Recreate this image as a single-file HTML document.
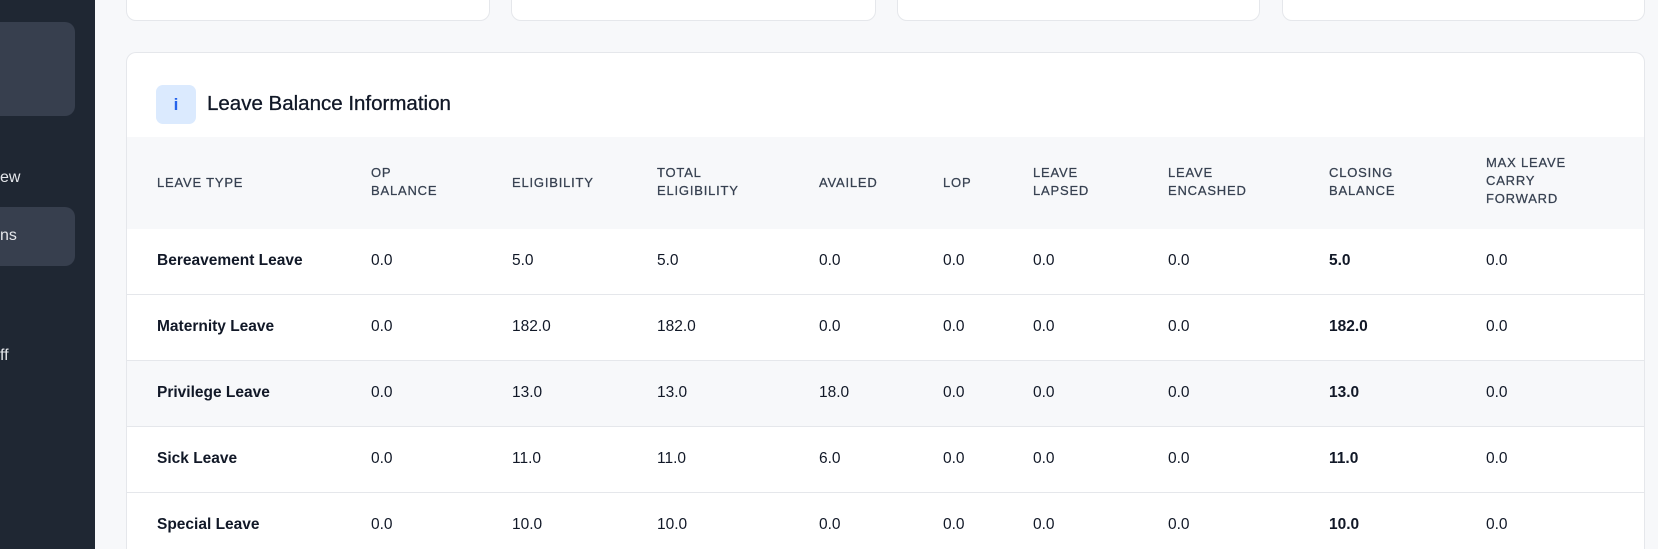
<!DOCTYPE html>
<html style="overflow:hidden;height:549px"><head><style>
*{margin:0;padding:0;box-sizing:border-box}
html,body{width:1658px;height:549px;overflow:hidden}
body{background:#f7f8fa;font-family:"Liberation Sans","DejaVu Sans",sans-serif;position:relative;color:#111827}
.sb{position:absolute;left:0;top:0;width:95px;height:549px;background:#1f2733}
.sbi{position:absolute;left:0;width:75px;background:#373f4e;border-radius:0 10px 10px 0}
.sbt{position:absolute;left:0;color:#e5e7eb;font-size:16px}
.tc{position:absolute;top:-10px;height:31px;background:#fff;border:1px solid #e5e7eb;border-radius:10px}
.card{position:absolute;left:126px;top:52px;width:1519px;height:497px;background:#fff;border:1px solid #e5e7eb;border-bottom:none;border-radius:10px 10px 0 0;overflow:hidden}
.ic{position:absolute;left:29px;top:32px;width:40px;height:39px;background:#dbeafe;border-radius:7px;color:#2563eb;font-size:17px;text-align:center;line-height:39px;font-weight:bold}
.tt{position:absolute;left:80px;top:39px;font-size:20.5px;color:#111827;-webkit-text-stroke:.3px #111827}
.hd{position:absolute;left:0;top:84px;width:100%;height:92px;background:#f7f8fa}
.h{position:absolute;font-size:13px;letter-spacing:.8px;color:#374151;line-height:18px;-webkit-text-stroke:.25px #374151}
.row{position:absolute;left:0;width:100%;height:66px;border-top:1px solid #e5e7eb}
.c{position:absolute;top:23px;font-size:15.5px;color:#111827}
.b{font-weight:bold}
</style></head><body>
<div class="sb">
<div class="sbi" style="top:22px;height:94px"></div>
<div class="sbt" style="top:169px">ew</div>
<div class="sbi" style="top:207px;height:59px"></div>
<div class="sbt" style="top:227px">ns</div>
<div class="sbt" style="top:347px">ff</div>
</div>
<div class="tc" style="left:126px;width:364px"></div>
<div class="tc" style="left:511px;width:365px"></div>
<div class="tc" style="left:897px;width:363px"></div>
<div class="tc" style="left:1282px;width:363px"></div>
<div class="card">
<div class="ic">i</div>
<div class="tt">Leave Balance Information</div>
<div class="hd">
<div class="h" style="left:30px;top:37px">LEAVE TYPE</div>
<div class="h" style="left:244px;top:27px">OP<br>BALANCE</div>
<div class="h" style="left:385px;top:37px">ELIGIBILITY</div>
<div class="h" style="left:530px;top:27px">TOTAL<br>ELIGIBILITY</div>
<div class="h" style="left:692px;top:37px">AVAILED</div>
<div class="h" style="left:816px;top:37px">LOP</div>
<div class="h" style="left:906px;top:27px">LEAVE<br>LAPSED</div>
<div class="h" style="left:1041px;top:27px">LEAVE<br>ENCASHED</div>
<div class="h" style="left:1202px;top:27px">CLOSING<br>BALANCE</div>
<div class="h" style="left:1359px;top:17px">MAX LEAVE<br>CARRY<br>FORWARD</div>
</div>
<div class="row" style="top:176px;border-top:none">
<div class="c b" style="left:30px">Bereavement Leave</div><div class="c" style="left:244px">0.0</div><div class="c" style="left:385px">5.0</div><div class="c" style="left:530px">5.0</div><div class="c" style="left:692px">0.0</div><div class="c" style="left:816px">0.0</div><div class="c" style="left:906px">0.0</div><div class="c" style="left:1041px">0.0</div><div class="c b" style="left:1202px">5.0</div><div class="c" style="left:1359px">0.0</div></div>
<div class="row" style="top:241px">
<div class="c b" style="left:30px">Maternity Leave</div><div class="c" style="left:244px">0.0</div><div class="c" style="left:385px">182.0</div><div class="c" style="left:530px">182.0</div><div class="c" style="left:692px">0.0</div><div class="c" style="left:816px">0.0</div><div class="c" style="left:906px">0.0</div><div class="c" style="left:1041px">0.0</div><div class="c b" style="left:1202px">182.0</div><div class="c" style="left:1359px">0.0</div></div>
<div class="row" style="top:307px;background:#f7f8fa">
<div class="c b" style="left:30px">Privilege Leave</div><div class="c" style="left:244px">0.0</div><div class="c" style="left:385px">13.0</div><div class="c" style="left:530px">13.0</div><div class="c" style="left:692px">18.0</div><div class="c" style="left:816px">0.0</div><div class="c" style="left:906px">0.0</div><div class="c" style="left:1041px">0.0</div><div class="c b" style="left:1202px">13.0</div><div class="c" style="left:1359px">0.0</div></div>
<div class="row" style="top:373px">
<div class="c b" style="left:30px">Sick Leave</div><div class="c" style="left:244px">0.0</div><div class="c" style="left:385px">11.0</div><div class="c" style="left:530px">11.0</div><div class="c" style="left:692px">6.0</div><div class="c" style="left:816px">0.0</div><div class="c" style="left:906px">0.0</div><div class="c" style="left:1041px">0.0</div><div class="c b" style="left:1202px">11.0</div><div class="c" style="left:1359px">0.0</div></div>
<div class="row" style="top:439px">
<div class="c b" style="left:30px">Special Leave</div><div class="c" style="left:244px">0.0</div><div class="c" style="left:385px">10.0</div><div class="c" style="left:530px">10.0</div><div class="c" style="left:692px">0.0</div><div class="c" style="left:816px">0.0</div><div class="c" style="left:906px">0.0</div><div class="c" style="left:1041px">0.0</div><div class="c b" style="left:1202px">10.0</div><div class="c" style="left:1359px">0.0</div></div>
</div>
</body></html>
